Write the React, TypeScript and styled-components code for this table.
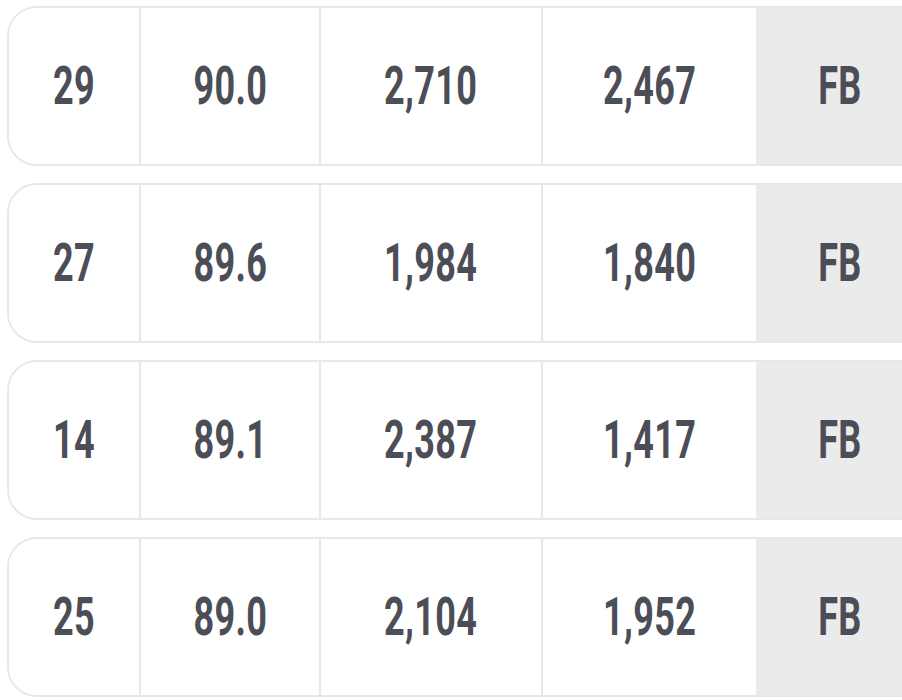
import React from 'react';
import styled, { createGlobalStyle } from 'styled-components';

const GlobalStyle = createGlobalStyle`
  html, body {
    margin: 0;
    padding: 0;
    background: #ffffff;
    overflow: hidden;
  }
  body {
    font-family: Roboto, "Liberation Sans", sans-serif;
  }
`;

const Table = styled.div`
  width: 902px;
  height: 700px;
  padding: 6px 0 0 7px;
  box-sizing: border-box;
  display: flex;
  flex-direction: column;
  align-items: flex-start;
  gap: 17px;
  overflow: hidden;
`;

const Row = styled.div`
  width: 960px;
  min-width: 960px;
  height: 160px;
  flex: none;
  box-sizing: border-box;
  border: 2px solid #e8e8e8;
  border-radius: 30px;
  overflow: hidden;
  display: grid;
  grid-template-columns: 132px 180px 222px 213px 1fr;
`;

const Cell = styled.div<{ $shaded?: boolean; $divider?: boolean }>`
  display: flex;
  align-items: center;
  justify-content: center;
  background: ${p => (p.$shaded ? '#ebebeb' : '#ffffff')};
  border-right: ${p => (p.$divider ? '2px solid #e8e8e8' : 'none')};
`;

const ShadedCell = styled(Cell)`
  justify-content: flex-start;
  padding-left: 52px;
`;

const Value = styled.span`
  display: inline-block;
  font-family: Roboto, "Liberation Sans", sans-serif;
  font-weight: 700;
  font-size: 53px;
  line-height: 1;
  color: #4b4e56;
  transform: scaleX(0.68);
  letter-spacing: 0.5px;
`;

const rows = [
  ['29', '90.0', '2,710', '2,467', 'FB'],
  ['27', '89.6', '1,984', '1,840', 'FB'],
  ['14', '89.1', '2,387', '1,417', 'FB'],
  ['25', '89.0', '2,104', '1,952', 'FB'],
];

export default function App() {
  return (
    <>
      <GlobalStyle />
      <Table>
        {rows.map((r, i) => (
          <Row key={i}>
            {r.slice(0, 4).map((v, j) => (
              <Cell key={j} $divider={j < 3}>
                <Value>{v}</Value>
              </Cell>
            ))}
            <ShadedCell $shaded>
              <Value>{r[4]}</Value>
            </ShadedCell>
          </Row>
        ))}
      </Table>
    </>
  );
}
